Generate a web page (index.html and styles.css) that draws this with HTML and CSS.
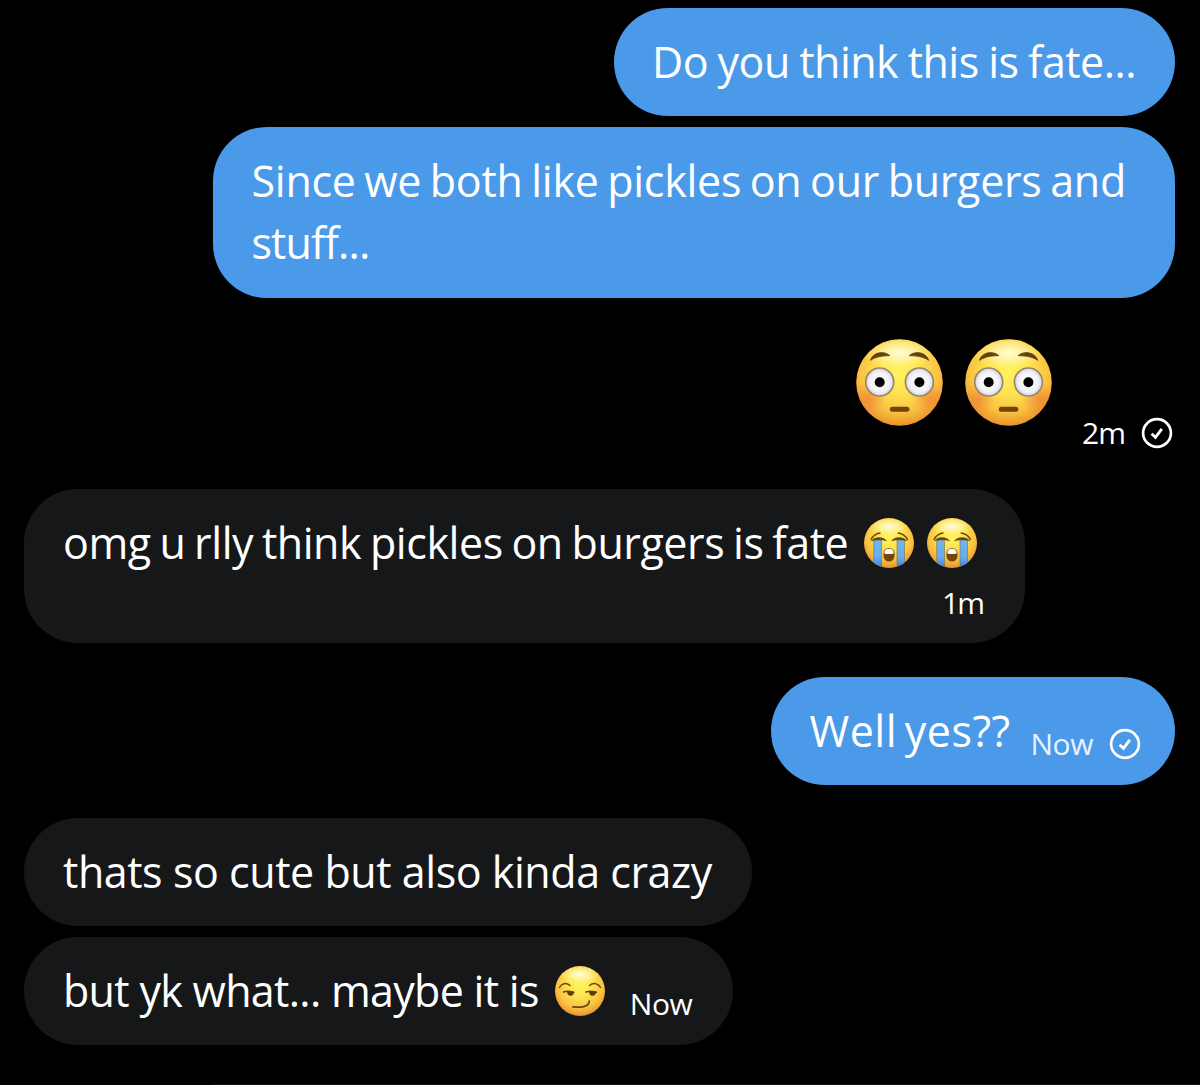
FILE: index.html
```html
<!DOCTYPE html>
<html lang="en">
<head>
  <meta charset="UTF-8">
  <title>Messages</title>
  <link rel="stylesheet" href="styles.css">
</head>
<body>
  <!-- shared emoji and icon shapes -->
  <svg class="defs" width="0" height="0">
    <defs>
      <radialGradient id="face" cx="50%" cy="38%" r="65%">
        <stop offset="0" stop-color="#fff35c"/>
        <stop offset="0.35" stop-color="#fee552"/>
        <stop offset="0.7" stop-color="#fac341"/>
        <stop offset="0.92" stop-color="#ec9a30"/>
        <stop offset="1" stop-color="#d67f26"/>
      </radialGradient>
      <radialGradient id="shine">
        <stop offset="0" stop-color="#fffde0" stop-opacity="0.95"/>
        <stop offset="0.5" stop-color="#fffac0" stop-opacity="0.6"/>
        <stop offset="1" stop-color="#fff46a" stop-opacity="0"/>
      </radialGradient>
      <radialGradient id="blush">
        <stop offset="0" stop-color="#ec6c32" stop-opacity="0.55"/>
        <stop offset="1" stop-color="#ec6c32" stop-opacity="0"/>
      </radialGradient>
      <radialGradient id="eye">
        <stop offset="0" stop-color="#ffffff"/>
        <stop offset="0.7" stop-color="#f3f2f8"/>
        <stop offset="1" stop-color="#d5d2dd"/>
      </radialGradient>
      <linearGradient id="tear" x1="0" y1="0" x2="0" y2="1">
        <stop offset="0" stop-color="#6fb4ee"/>
        <stop offset="0.6" stop-color="#67adf0"/>
        <stop offset="1" stop-color="#3b82d8"/>
      </linearGradient>
      <clipPath id="round"><circle cx="25" cy="25" r="25"/></clipPath>
      <clipPath id="bigRound"><circle cx="43.5" cy="43.5" r="43.3"/></clipPath>
    </defs>
    <symbol id="flushed" viewBox="0 0 87 87">
      <circle cx="43.5" cy="43.5" r="43.3" fill="url(#face)"/>
      <g clip-path="url(#bigRound)">
        <ellipse cx="43.5" cy="14" rx="36" ry="17" fill="url(#shine)"/>
        <circle cx="13" cy="60" r="17" fill="url(#blush)"/>
        <circle cx="74" cy="60" r="17" fill="url(#blush)"/>
      </g>
      <path d="M14.5 21.3C17 13 28 11.5 33.700 16.600C26 16.800 20 17.500 14.500 21.300ZM72.700 21.300C70 13 59 11.500 53.300 16.600C61 16.800 67 17.500 72.700 21.300Z" fill="#63400f" stroke="#63400f" stroke-width="1" stroke-linejoin="round"/>
      <circle cx="23.700" cy="43" r="14" fill="url(#eye)" stroke="#98856a" stroke-width="1.600"/>
      <circle cx="63.400" cy="43" r="14" fill="url(#eye)" stroke="#98856a" stroke-width="1.600"/>
      <circle cx="23.700" cy="43.200" r="5" fill="#000"/>
      <circle cx="63.400" cy="43.200" r="5" fill="#000"/>
      <rect x="33.800" y="67.800" width="19.600" height="5" rx="2.500" fill="#74430a"/>
    </symbol>
    <symbol id="crying" viewBox="0 0 50 50">
      <circle cx="25" cy="25" r="25" fill="url(#face)"/>
      <g clip-path="url(#round)">
        <ellipse cx="25" cy="8.500" rx="21" ry="10" fill="url(#shine)"/>
        <path d="M9.700 22H17.500V50H9.700ZM33 22H40.500V50H33Z" fill="url(#tear)" stroke="#80713e" stroke-width="0.600"/>
      </g>
      <path d="M7 21.500Q10 16 16 15M34.200 15Q40.500 16 43.500 21.500" fill="none" stroke="#6b4710" stroke-width="1.400" stroke-linecap="round"/>
      <path d="M7 23.300C10 17.800 20 17.800 23 23.300Q15 20.600 7 23.300ZM27.200 23.300C30 17.800 40 17.800 43.300 23.300Q35 20.600 27.200 23.300Z" fill="#6b4710"/>
      <rect x="19.500" y="30" width="11" height="13.500" rx="5.400" fill="#77460d"/>
      <path d="M20.300 35.600Q20.300 30.800 25 30.800T29.700 35.600Q25 36.600 20.300 35.600Z" fill="#fff"/>
    </symbol>
    <symbol id="smirk" viewBox="0 0 50 50">
      <circle cx="25" cy="25" r="25" fill="url(#face)"/>
      <g clip-path="url(#round)">
        <ellipse cx="25" cy="8.500" rx="21" ry="10" fill="url(#shine)"/>
      </g>
      <g fill="none" stroke="#6b4710" stroke-width="1.500" stroke-linecap="round">
        <path d="M4.500 21.500C6.500 17.500 11 16.200 15 19.500M34.500 19.500C38.500 16.200 43.500 17.500 45.500 21.500"/>
        <path d="M8.500 26Q13 24.300 18.800 26.400M31 26Q35.500 24.300 41.500 26.200"/>
        <path d="M17.800 40.800C25 41.800 34 41.200 34.300 35.200" stroke-width="1.800"/>
      </g>
      <path d="M12 25.500H18.800Q19 29.800 15.700 29.800T12 25.500ZM34 25.500H41Q41 29.800 37.600 29.800T34 25.500Z" fill="#5b3a0c"/>
    </symbol>
    <symbol id="check" viewBox="0 0 32 32">
      <circle cx="16" cy="16" r="13.900" fill="none" stroke="currentColor" stroke-width="2.700"/>
      <path d="M10.600 16.700L14.500 20.300L20.800 11.900" fill="none" stroke="currentColor" stroke-width="2.800"/>
    </symbol>
  </svg>

  <main class="chat">
    <div class="bubble sent fate"><span class="text">Do you think this is fate...</span></div>
    <div class="bubble sent since">
      <span class="text">Since we both like pickles on our burgers and</span>
      <span class="text stuff">stuff...</span>
    </div>

    <div class="reaction">
      <svg class="emoji-big" role="img" aria-label="flushed face"><use href="#flushed"/></svg>
      <svg class="emoji-big" role="img" aria-label="flushed face"><use href="#flushed"/></svg>
      <div class="meta"><span>2m</span><svg class="check"><use href="#check"/></svg></div>
    </div>

    <div class="bubble received omg">
      <div class="line">
        <span class="text">omg u rlly think pickles on burgers is fate</span>
        <svg class="emoji" role="img" aria-label="loudly crying face"><use href="#crying"/></svg>
        <svg class="emoji" role="img" aria-label="loudly crying face"><use href="#crying"/></svg>
      </div>
      <div class="meta"><span>1m</span></div>
    </div>

    <div class="bubble sent well">
      <span class="text">Well yes??</span>
      <div class="meta"><span>Now</span><svg class="check"><use href="#check"/></svg></div>
    </div>

    <div class="bubble received cute"><span class="text">thats so cute but also kinda crazy</span></div>
    <div class="bubble received maybe">
      <span class="text">but yk what... maybe it is</span>
      <svg class="emoji" role="img" aria-label="smirking face"><use href="#smirk"/></svg>
      <div class="meta"><span>Now</span></div>
    </div>
    <div class="edge"></div>
  </main>
</body>
</html>
```
FILE: styles.css
```css
* { box-sizing: border-box; }
body { margin: 0; background: #000; color: #fff; font-family: "Open Sans", sans-serif; }
.defs { position: absolute; }
.chat { display: flex; flex-direction: column; height: 1085px; padding: 8px 25px 0 24px; overflow: hidden; }

.bubble { display: flex; height: 108px; padding: 23px 38px 0 39px; border-radius: 54px; font-size: 43px; line-height: 62px; }
.sent { align-self: flex-end; padding-left: 38.5px; background: #4b99e9; }
.received { align-self: flex-start; background: #161718; }
.text { white-space: nowrap; letter-spacing: -0.7px; }
.line { display: flex; }

.fate { width: 561.5px; }
.fate .text { letter-spacing: -0.55px; word-spacing: -1px; }
.since { flex-direction: column; width: 962px; height: 171px; margin-top: 11px; }
.since .text { letter-spacing: -0.27px; word-spacing: -2.3px; }
.since .stuff { letter-spacing: -0.9px; }
.omg { flex-direction: column; width: 1001px; height: 154px; margin-top: 39px; }
.omg .text { letter-spacing: -0.44px; word-spacing: -2px; }
.well { width: 404px; margin-top: 34px; }
.well .text { letter-spacing: 0.5px; word-spacing: -4px; }
.cute { width: 728px; margin-top: 33px; }
.cute .text { letter-spacing: -0.45px; }
.maybe { width: 709px; margin-top: 11px; }

.reaction { display: flex; align-self: flex-end; height: 112px; margin-top: 40px; }
.emoji-big { width: 87px; height: 87px; margin: 1px 22px 0 0; }
.emoji { flex: none; width: 50px; height: 50px; margin: 6px 0 0 13px; }
.text + .emoji { margin-left: 16px; }

.meta { display: flex; align-items: center; font-size: 30px; line-height: 40px; letter-spacing: -0.5px; }
.check { flex: none; width: 32px; height: 32px; }
.reaction .meta { gap: 16px; margin: 75px 2px 0 8px; height: 40px; letter-spacing: -1px; }
.omg .meta { align-self: flex-end; margin: 9px 4px 0 0; letter-spacing: -2px; }
.well .meta { gap: 16px; height: 40px; margin: 24px 0 0 20px; }
.maybe .meta { height: 40px; margin: 24px 0 0 25px; }
.well .meta span { color: #e6f2ff; }

.edge { height: 1px; margin: auto -25px 0 188px; background: #151111; }
```
